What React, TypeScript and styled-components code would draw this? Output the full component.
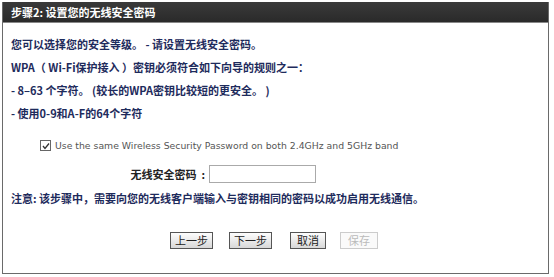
import React from "react";
import styled, { createGlobalStyle } from "styled-components";

const Global = createGlobalStyle`
  html, body { margin: 0; padding: 0; background: #fff; }
  body { font-family: "Noto Sans CJK SC", "Liberation Sans", sans-serif; }
`;

const Page = styled.div`
  width: 554px;
  height: 277px;
  padding: 2px 5px 4px 2px;
  box-sizing: border-box;
  background: #fff;
`;

const Panel = styled.div`
  height: 100%;
  border: 1px solid #6a6a6a;
  border-top: none;
  display: flex;
  flex-direction: column;
`;

const Header = styled.div`
  height: 20px;
  background: linear-gradient(#3a3a3a, #2a2a2a);
  color: #fff;
  font-weight: 700;
  font-size: 11px;
  line-height: 20px;
  padding-left: 8px;
  border-bottom: 1px solid #888;
`;

const Body = styled.div`
  flex: 1;
  padding: 14px 0 0 8px;
  display: flex;
  flex-direction: column;
`;

const Line = styled.div<{ $gap?: number; $top?: number }>`
  font-size: 11px;
  font-weight: 700;
  color: #1e2b5c;
  line-height: 14px;
  margin-top: ${(p) => p.$top ?? 0}px;
  margin-bottom: ${(p) => p.$gap ?? 9}px;
  white-space: nowrap;
`;

const CheckRow = styled.label`
  display: flex;
  align-items: center;
  gap: 4px;
  margin: 20px 0 0 29px;
  font-family: "DejaVu Sans", sans-serif;
  font-size: 9.3px;
  line-height: 11px;
  color: #555;
  white-space: nowrap;
`;

const Box = styled.span`
  width: 9px;
  height: 9px;
  border: 1px solid #666;
  background: #fff;
  display: inline-flex;
  align-items: center;
  justify-content: center;
`;

const FieldRow = styled.div`
  display: flex;
  align-items: center;
  margin-top: 14px;
  padding-left: 114px;
`;

const FieldLabel = styled.span`
  font-size: 11px;
  font-weight: 700;
  color: #222;
  width: 80px;
  text-align: right;
  white-space: pre;
`;

const Input = styled.div`
  width: 105px;
  height: 16px;
  border: 1px solid #aaa;
  margin-left: 4px;
  background: #fff;
`;

const Buttons = styled.div`
  display: flex;
  padding-left: 159px;
  margin-top: 27px;
`;

const Btn = styled.div<{ $disabled?: boolean; $w?: number; $ml?: number }>`
  width: ${(p) => p.$w ?? 43}px;
  margin-left: ${(p) => p.$ml ?? 0}px;
  height: 17px;
  box-sizing: border-box;
  border: 1px solid ${(p) => (p.$disabled ? "#ccc" : "#555")};
  background: ${(p) =>
    p.$disabled ? "#fafafa" : "linear-gradient(#fdfdfd, #d8d8d8)"};
  color: ${(p) => (p.$disabled ? "#bbb" : "#222")};
  font-size: 11px;
  line-height: 15px;
  text-align: center;
`;

export default function App() {
  return (
    <Page>
      <Global />
      <Panel>
        <Header>步骤2: 设置您的无线安全密码</Header>
        <Body>
          <Line>您可以选择您的安全等级。 - 请设置无线安全密码。</Line>
          <Line>WPA（ Wi-Fi保护接入 ）密钥必须符合如下向导的规则之一：</Line>
          <Line>- 8–63 个字符。 (较长的WPA密钥比较短的更安全。 )</Line>
          <Line $gap={0}>- 使用0-9和A-F的64个字符</Line>
          <CheckRow>
            <Box>
              <svg width="8" height="8" viewBox="0 0 8 8">
                <path d="M1 4 L3 6.5 L7 1.5" stroke="#333" strokeWidth="1.3" fill="none" />
              </svg>
            </Box>
            Use the same Wireless Security Password on both 2.4GHz and 5GHz band
          </CheckRow>
          <FieldRow>
            <FieldLabel>无线安全密码  :</FieldLabel>
            <Input />
          </FieldRow>
          <Line $gap={0} $top={8}>
            注意: 该步骤中，需要向您的无线客户端输入与密钥相同的密码以成功启用无线通信。
          </Line>
          <Buttons>
            <Btn>上一步</Btn>
            <Btn $ml={16}>下一步</Btn>
            <Btn $ml={18} $w={36}>取消</Btn>
            <Btn $ml={14} $w={38} $disabled>保存</Btn>
          </Buttons>
        </Body>
      </Panel>
    </Page>
  );
}
